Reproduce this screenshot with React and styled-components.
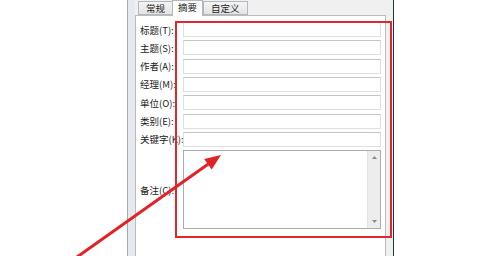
import React from "react";
import styled, { createGlobalStyle } from "styled-components";

const Global = createGlobalStyle`
  html, body { margin: 0; padding: 0; background: #ffffff; }
  #root { width: 500px; height: 256px; }
`;

const Page = styled.div`
  position: relative;
  width: 500px;
  height: 256px;
  overflow: hidden;
  background: #ffffff;
  font-family: "Noto Sans CJK SC", "Noto Sans", sans-serif;
`;

const Window = styled.div`
  display: flex;
  margin-left: 127px;
  width: 267px;
  height: 256px;
`;

const FrameEdge = styled.div`
  width: 8px;
  box-sizing: border-box;
  border-left: 1px solid #a3aab3;
  background: #e6e9ed;
`;

const Body = styled.div`
  flex: 1;
  display: flex;
  flex-direction: column;
  box-sizing: border-box;
  background: #f0f0f0;
  padding-right: 7px;
  border-right: 1px solid #1f3540;
`;

const TabStrip = styled.div`
  display: flex;
  align-items: flex-end;
  height: 15px;
  padding-left: 3px;
  position: relative;
  z-index: 2;
`;

const Tab = styled.div`
  box-sizing: border-box;
  height: ${(p) => (p.$active ? "16px" : "14px")};
  margin-bottom: ${(p) => (p.$active ? "-1px" : "0")};
  padding: 0 ${(p) => p.$pad}px;
  border: 1px solid #b4b7bc;
  border-bottom: ${(p) => (p.$active ? "none" : "1px solid #b4b7bc")};
  ${(p) => (p.$active ? "" : "border-right: none;")}
  background: ${(p) =>
    p.$active ? "#ffffff" : "linear-gradient(#f4f4f4, #e4e4e4)"};
  font-size: 9.5px;
  line-height: 12px;
  color: #222;
  white-space: nowrap;
  &:last-child { border-right: 1px solid #b4b7bc; }
`;

const Pane = styled.div`
  flex: 1;
  background: #ffffff;
  border: 1px solid #b9bcc1;
  border-bottom: none;
  padding: 6px 4px 0 4px;
`;

const Form = styled.div`
  display: grid;
  grid-template-columns: 43px 1fr;
  grid-template-rows: repeat(7, 15px) 79px;
  row-gap: 3.33px;
  align-items: center;
`;

const Label = styled.div`
  font-size: 9.5px;
  line-height: 12px;
  color: #1b1b1b;
  white-space: nowrap;
  overflow: hidden;
`;

const TextBox = styled.div`
  height: 15px;
  box-sizing: border-box;
  border: 1px solid #dcdfe3;
  border-top-color: #c2c6cc;
  background: #fff;
`;

const MemoBox = styled.div`
  height: 79px;
  box-sizing: border-box;
  border: 1px solid #a9acb2;
  background: #fff;
  display: flex;
  justify-content: flex-end;
`;

const ScrollBar = styled.div`
  width: 12px;
  background: #ededed;
  border-left: 1px solid #e2e2e2;
  display: flex;
  flex-direction: column;
  justify-content: space-between;
  align-items: center;
  padding: 5px 0;
`;

const ArrowGlyph = styled.svg`
  width: 5px;
  height: 3px;
  display: block;
`;

const Highlight = styled.div`
  position: absolute;
  left: 175px;
  top: 21px;
  width: 217px;
  height: 217px;
  box-sizing: border-box;
  border: 2px solid #e2262b;
  pointer-events: none;
`;

const Pointer = styled.svg`
  position: absolute;
  left: 0;
  top: 0;
  width: 500px;
  height: 256px;
  pointer-events: none;
`;

const fields = ["标题(T):", "主题(S):", "作者(A):", "经理(M):", "单位(O):", "类别(E):", "关键字(K):"];

export default function App() {
  return (
    <>
      <Global />
      <Page>
        <Window>
          <FrameEdge />
          <Body>
            <TabStrip>
              <Tab $pad={7}>常规</Tab>
              <Tab $active $pad={5}>摘要</Tab>
              <Tab $pad={7}>自定义</Tab>
            </TabStrip>
            <Pane>
              <Form>
                {fields.map((f) => (
                  <React.Fragment key={f}>
                    <Label>{f}</Label>
                    <TextBox />
                  </React.Fragment>
                ))}
                <Label>备注(C):</Label>
                <MemoBox>
                  <ScrollBar>
                    <ArrowGlyph viewBox="0 0 5 3">
                      <polygon points="2.5,0 5,3 0,3" fill="#8a8a8a" />
                    </ArrowGlyph>
                    <ArrowGlyph viewBox="0 0 5 3">
                      <polygon points="0,0 5,0 2.5,3" fill="#8a8a8a" />
                    </ArrowGlyph>
                  </ScrollBar>
                </MemoBox>
              </Form>
            </Pane>
          </Body>
        </Window>
        <Highlight />
        <Pointer viewBox="0 0 500 256">
          <line x1="70" y1="262" x2="209" y2="163.5" stroke="#e32228" strokeWidth="3" />
          <polygon points="221,155 211.7,169.5 204.2,158.9" fill="#e32228" />
        </Pointer>
      </Page>
    </>
  );
}
